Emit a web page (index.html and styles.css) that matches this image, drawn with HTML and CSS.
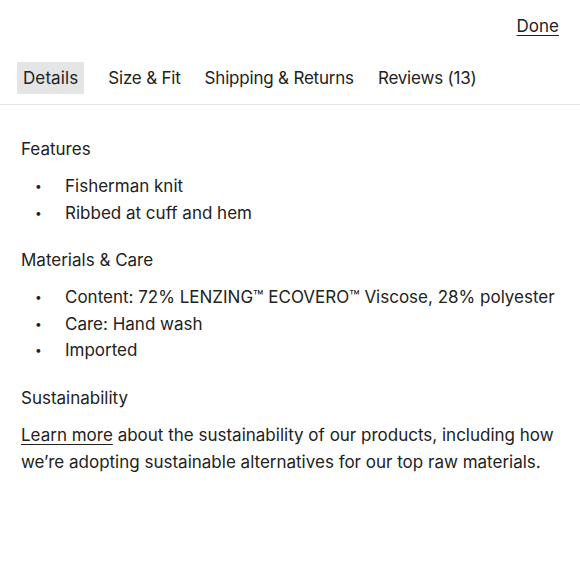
FILE: index.html
```html
<!DOCTYPE html>
<html>
<head>
<meta charset="utf-8">
<link rel="stylesheet" href="styles.css">
</head>
<body>
<div class="top">
  <a class="done" href="#">Done</a>
</div>
<nav class="tabs">
  <span class="tab active">Details</span>
  <span class="tab">Size &amp; Fit</span>
  <span class="tab">Shipping &amp; Returns</span>
  <span class="tab">Reviews (13)</span>
</nav>
<main class="content">
  <h2 class="heading">Features</h2>
  <ul class="list">
    <li>Fisherman knit</li>
    <li>Ribbed at cuff and hem</li>
  </ul>
  <h2 class="heading">Materials &amp; Care</h2>
  <ul class="list">
    <li>Content: 72% LENZING™ ECOVERO™ Viscose, 28% polyester</li>
    <li>Care: Hand wash</li>
    <li>Imported</li>
  </ul>
  <h2 class="heading">Sustainability</h2>
  <p class="para"><a href="#" class="link">Learn more</a> about the sustainability of our products, including how we’re adopting sustainable alternatives for our top raw materials.</p>
</main>
</body>
</html>
```
FILE: styles.css
```css
html, body {
  margin: 0;
  padding: 0;
  background: #fff;
}
body {
  font-family: Inter, "Open Sans", sans-serif;
  font-size: 17px;
  color: #222;
}
.top {
  display: flex;
  justify-content: flex-end;
  padding: 15px 21px 0 0;
  height: 48px;
  box-sizing: border-box;
}
.done {
  color: #222;
  text-decoration: underline;
  text-underline-offset: 3px;
  line-height: 22px;
}
.tabs {
  display: flex;
  gap: 12px;
  padding: 14px 0 10px 17px;
  border-bottom: 1px solid #e3e3e3;
}
.tab {
  display: block;
  padding: 0 6px;
  height: 32px;
  line-height: 33px;
  letter-spacing: -0.2px;
}
.tab.active {
  background: #e5e5e5;
  margin-right: 6px;
  letter-spacing: 0.1px;
}
.content {
  padding: 31px 21px 0 21px;
}
.heading {
  margin: 0;
  font-size: 17px;
  font-weight: 400;
  line-height: 26px;
}
.list {
  list-style: none;
  margin: 11px 0 21px 0;
  padding: 0;
}
.list li {
  display: flex;
  line-height: 26.5px;
}
.list li::before {
  content: "•";
  flex: 0 0 44px;
  box-sizing: border-box;
  padding-left: 14px;
  font-size: 12px;
}
.para {
  margin: 11px 0 0 0;
  line-height: 27px;
}
.link {
  color: #222;
  text-decoration: underline;
  text-underline-offset: 3px;
}
```
